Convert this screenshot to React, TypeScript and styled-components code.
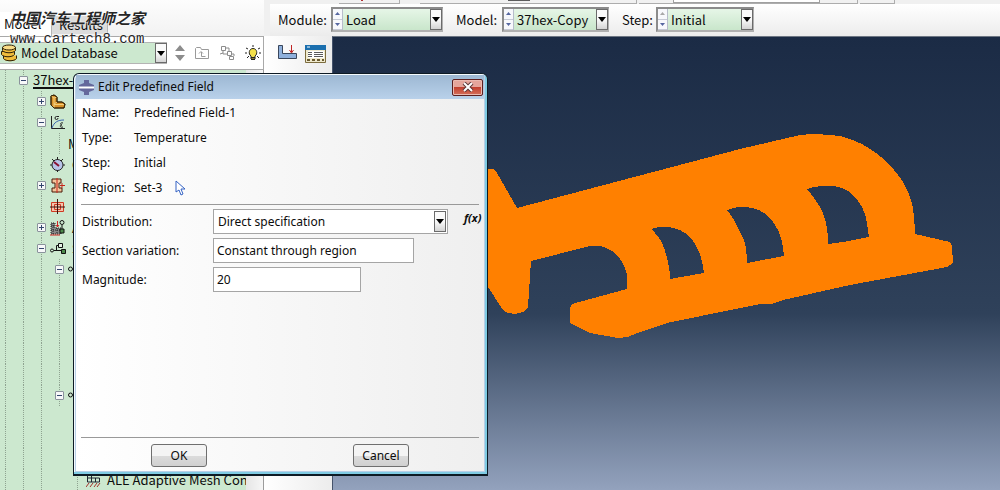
import React from 'react';
import styled, { createGlobalStyle, css } from 'styled-components';

const GlobalStyle = createGlobalStyle`
  * { box-sizing: border-box; }
  body {
    margin: 0;
    overflow: hidden;
    background: #f0f0f0;
    color: #0c0c0c;
    font: 13px/20px "Noto Sans CJK SC", sans-serif;
  }
  button, input, select { font: inherit; color: inherit; }
  svg { display: block; flex: none; }
`;

/* ---------- page frame ---------- */

const Page = styled.div`
  position: relative;
  display: flex;
  min-height: 100vh;
  overflow: hidden;
`;

const Sidebar = styled.aside`
  display: flex;
  flex-direction: column;
  width: 264px;
  flex: none;
  background: #fafafa;
`;

const TabBar = styled.div`
  display: flex;
  align-items: flex-end;
  height: 36px;
  background: linear-gradient(#fdfdfd, #f2f2f2);
`;

const Tab = styled.button<{ $active?: boolean }>`
  height: ${(p) => (p.$active ? 24 : 18)}px;
  width: ${(p) => (p.$active ? 52 : 56)}px;
  margin-bottom: ${(p) => (p.$active ? 0 : 2)}px;
  padding: 0 0 0 4px;
  border: 0;
  border-right: 1px solid #b4b4b4;
  text-align: left;
  line-height: 18px;
  background: ${(p) => (p.$active ? '#ffffff' : '#dcdcdc')};
  ${(p) => !p.$active && css`padding-left: 7px;`}
`;

const DatabaseBar = styled.div`
  display: flex;
  align-items: center;
  gap: 8px;
  height: 34px;
  padding-right: 2px;
  border: 1px solid #a9a9a9;
  border-left: 0;
  background: #ffffff;
`;

const DatabasePicker = styled.div`
  display: flex;
  align-items: center;
  width: 167px;
  height: 22px;
  border: 1px solid #b4b4b4;
  border-width: 1px 0;
  background: #cce8cf;
`;

const ToolButton = styled.button`
  display: flex;
  padding: 0;
  border: 0;
  background: none;
`;

const TreeArea = styled.div`
  display: flex;
  flex: 1;
  border-right: 1px solid #9c9c9c;
`;

const Tree = styled.ul`
  flex: 1;
  margin: 0;
  padding: 0;
  list-style: none;
  background: #cce8cf;
  overflow: hidden;
`;

const ScrollTrack = styled.div`
  width: 17px;
  background: linear-gradient(90deg, #e6e6e6, #f6f6f6);
`;

const TreeRow = styled.li`
  display: flex;
  align-items: center;
  height: 21px;
  white-space: nowrap;
`;

const Guide = styled.span<{ $line?: boolean; $first?: boolean }>`
  display: flex;
  align-items: center;
  justify-content: center;
  flex: none;
  align-self: stretch;
  width: ${(p) => (p.$first ? 14 : 18)}px;
  ${(p) => p.$line && css`
    background: repeating-linear-gradient(#8fa391 0 1px, transparent 1px 2px)
      ${p.$first ? 5 : 9}px 0 / 1px 100% no-repeat;
  `}
`;

const Expander = styled.button`
  display: flex;
  align-items: center;
  justify-content: center;
  width: 9px;
  height: 9px;
  padding: 0;
  border: 1px solid #8a929c;
  border-radius: 1px;
  background: #f7f8f9;
`;

const NodeIcon = styled.span<{ $wide?: boolean }>`
  display: block;
  flex: none;
  width: ${(p) => (p.$wide ? 22 : 21)}px;
`;

const NodeLabel = styled.span<{ $root?: boolean }>`
  line-height: 18px;
  ${(p) => p.$root && css`
    margin-left: 1px;
    border-bottom: 2px solid #111;
    line-height: 14px;
  `}
`;

const Main = styled.main`
  display: flex;
  flex-direction: column;
  flex: 1;
  min-width: 0;
`;

const ToolStrip = styled.div`
  display: flex;
  gap: 2px;
  height: 4px;
  padding-left: 75px;
`;

const StripSlot = styled.div<{ $w: number; $inner?: boolean }>`
  width: ${(p) => p.$w}px;
  height: 4px;
  padding-left: 34px;
  border: 1px solid #adadad;
  border-width: 0 1px 1px 0;
  background: #f1f1f1;
  &::before {
    content: "";
    display: ${(p) => (p.$inner ? 'block' : 'none')};
    width: 145px;
    height: 2px;
    border: 1px solid #a0a0a0;
    border-top: 0;
    background: #ffffff;
  }
`;

const StripMark = styled.div<{ $w: number; $indent: number; $color: string }>`
  width: ${(p) => p.$w}px;
  height: 1px;
  margin-left: ${(p) => p.$indent}px;
  background: ${(p) => p.$color};
`;

const StripSpace = styled.div`
  width: 16px;
`;

const ContextBar = styled.div`
  display: flex;
  align-items: center;
  height: 32px;
  margin-left: 6px;
  padding: 0 0 1px 8px;
  background: linear-gradient(#ffffff, #ececec);
  white-space: nowrap;
`;

const ContextLabel = styled.label<{ $w: number }>`
  width: ${(p) => p.$w}px;
`;

const ContextCombo = styled.div<{ $w: number; $gap: number }>`
  display: flex;
  width: ${(p) => p.$w}px;
  height: 25px;
  margin-right: ${(p) => p.$gap}px;
  border: 2px solid #8b8b8b;
  border-right: 1px solid #b0b0b0;
  border-bottom-color: #b0b0b0;
  background: linear-gradient(#e6f6e7, #c9e6cb);
`;

const Spinner = styled.div`
  display: flex;
  flex-direction: column;
  width: 10px;
  border-right: 1px solid #b7bccb;
  background: #f7f8fc;
`;

const SpinButton = styled.button`
  display: flex;
  flex: 1;
  align-items: center;
  justify-content: center;
  padding: 0;
  border: 0;
  border-bottom: 1px solid #c6cad6;
  background: none;
`;

const PlainSelect = styled.select`
  appearance: none;
  flex: 1;
  min-width: 0;
  height: 100%;
  padding: 0 0 0 3px;
  border: 0;
  outline: 0;
  background: transparent;
`;

const ArrowButton = styled.button`
  display: flex;
  align-items: center;
  justify-content: center;
  flex: none;
  align-self: stretch;
  width: 12px;
  padding: 0;
  border: 1px solid #6b6b6b;
  background: linear-gradient(#fafafa 50%, #d4d4d4);
`;

const Workspace = styled.div`
  display: flex;
  flex: 1;
`;

const Toolbox = styled.div`
  display: flex;
  align-items: flex-start;
  gap: 8px;
  width: 68px;
  padding: 9px 0 0 14px;
  background: linear-gradient(90deg, #ffffff, #ececec);
`;

const Viewport = styled.div`
  position: relative;
  flex: 1;
  overflow: hidden;
  border-top: 1px solid #6d7683;
  border-left: 1px solid #45536b;
  background: linear-gradient(#1b2b45 0%, #2f415a 61%, #93a2bd 100%);
`;

const Model = styled.svg`
  position: absolute;
  top: 0;
  left: 0;
`;

/* ---------- watermark ---------- */

const Watermark = styled.div`
  position: absolute;
  top: 6px;
  left: 10px;
  color: #262626;
  text-shadow: 0 0 1px #fff, 0 0 2px #fff;
  pointer-events: none;
`;

const WatermarkTitle = styled.div`
  font: italic 700 15px/24px "Noto Sans CJK SC", sans-serif;
`;

const WatermarkSite = styled.div`
  font: 14px/18px "Liberation Mono", monospace;
`;

/* ---------- dialog ---------- */

const Dialog = styled.section`
  position: absolute;
  top: 73px;
  left: 73px;
  display: flex;
  flex-direction: column;
  width: 415px;
  border: 1px solid #0d1a24;
  border-width: 1px 1px 2px;
  border-radius: 6px 6px 0 0;
  background: #b8cfe6;
  box-shadow: inset -2px -2px 0 #7fcbe3, inset 1px 1px 0 #f4fafd;
  padding: 0 3px 3px 2px;
  font: 12px/20px "Noto Sans", sans-serif;
`;

const TitleBar = styled.header`
  display: flex;
  align-items: center;
  gap: 4px;
  height: 24px;
  padding: 0 1px 0 3px;
  margin-top: 1px;
  background: linear-gradient(#9db8d3, #b9d1ea);
`;

const Title = styled.h1`
  flex: 1;
  margin: 0;
  font: inherit;
`;

const CloseButton = styled.button`
  display: flex;
  align-items: center;
  justify-content: center;
  width: 31px;
  height: 17px;
  padding: 0;
  border: 1px solid #5c1f1f;
  border-radius: 2px;
  background: linear-gradient(#e5a59b 0 45%, #c2402f 50%, #d4705c);
  box-shadow: inset 0 0 0 1px #eab9b0;
`;

const DialogBody = styled.form`
  padding: 1px 5px 4px 5px;
  background: linear-gradient(90deg, #ffffff, #efefef);
`;

const Facts = styled.dl`
  display: grid;
  grid-template-columns: 52px 1fr;
  grid-auto-rows: 25px;
  align-items: center;
  margin: 0;
  padding-left: 1px;
`;

const Fact = styled.dd`
  display: flex;
  align-items: center;
  gap: 13px;
  margin: 0;
`;

const Rule = styled.hr`
  height: 1px;
  margin: 4px 0;
  border: 0;
  background: #999999;
`;

const Fields = styled.div`
  display: grid;
  gap: 4px;
  padding-left: 1px;
  min-height: 224px;
  align-content: start;
`;

const FieldRow = styled.div`
  display: flex;
  height: 25px;
`;

const FieldLabel = styled.label`
  width: 131px;
  line-height: 25px;
`;

const TextBox = styled.input<{ $w: number }>`
  width: ${(p) => p.$w}px;
  padding: 0 3px;
  border: 1px solid #a5a5a5;
  outline: 0;
  background: #ffffff;
`;

const SelectBox = styled.div`
  display: flex;
  width: 235px;
  padding: 1px;
  border: 1px solid #a5a5a5;
  background: #ffffff;
`;

const FunctionButton = styled.button`
  align-self: flex-start;
  margin-left: 16px;
  padding: 0;
  border: 0;
  background: none;
  font: italic bold 11px/18px "Open Sans", sans-serif;
`;

const Actions = styled.footer`
  display: flex;
  justify-content: space-between;
  padding: 2px 70px 0;
`;

const ActionButton = styled.button`
  width: 56px;
  height: 23px;
  padding: 0;
  border: 1px solid #6f6f6f;
  border-radius: 3px;
  background: linear-gradient(#f4f4f4 0 50%, #dcdcdc 50%, #d0d0d0);
  line-height: 20px;
`;

/* ---------- drawings ---------- */

const DownArrow = () => (
  <svg width="8" height="5"><path d="M0 0h8L4 5z" fill="#000" /></svg>
);

const SpinArrow = ({ up, muted }: { up?: boolean; muted?: boolean }) => (
  <svg width="5" height="3"><path d={up ? 'M0 3h5L2.500 0z' : 'M0 0h5L2.500 3z'} fill={muted ? '#a8a8a8' : '#5566a0'} /></svg>
);

const ExpandMark = ({ plus }: { plus?: boolean }) => (
  <svg width="5" height="5" stroke="#34466e"><path d={plus ? 'M0 2.500h5M2.500 0v5' : 'M0 2.500h5'} /></svg>
);

const DatabaseIcon = () => (
  <svg width="18" height="18" fill="#f0bd3c" stroke="#2c2008">
    <path d="M3.500 12v3c2 3 11 3 13 0v-3z" stroke="none" />
    <path d="M3.500 11.500v3c2 3 11 3 13 0v-3" />
    <path d="M1.500 7.500v3c2 3 11 3 13 0v-3z" />
    <path d="M2.500 3.500v3c2 3 11 3 13 0v-3z" />
    <ellipse cx="9" cy="3.500" rx="6.500" ry="2.500" fill="#f9dc86" />
  </svg>
);

type IconName = 'part' | 'material' | 'calibration' | 'section' | 'profile' | 'assembly' | 'step' | 'node' | 'mesh';

const icons: Record<IconName, React.ReactNode> = {
  part: (
    <g stroke="#3b2606" strokeLinejoin="round">
      <path d="M1 2l3-1 3 2v5h5l3 2-1 4H4L1 11z" fill="#d8922a" />
      <path d="M1 2l3 2v10M4 4l3-1M4 10l3-2M4 10.500h10" fill="none" stroke="#f3cf7c" />
      <path d="M1 2l3-1 3 2v5h5l3 2-1 4H4L1 11z" fill="none" />
    </g>
  ),
  material: (
    <g fill="none">
      <path d="M1.500 1v12.500H15" stroke="#222" />
      <path d="M2 13C4 7 8 5 14 5" stroke="#3a66b0" />
      <path d="M9 1.500H6.500a1.500 1.500 0 1 0 1.500 1.500M13 8c-3-1-3 2-1 2-3 0-2 3 1 2" stroke="#222" />
    </g>
  ),
  calibration: (
    <g fill="none" stroke="#222">
      <circle cx="7.500" cy="8" r="5.500" fill="#b8c4e8" />
      <path d="M7.500 0v3M7.500 13v2M0 8h2M13 8h2M2 2l2 2M13 2l-2 2" />
      <path d="M4 5l5 4" stroke="#8a1230" strokeWidth="2" />
    </g>
  ),
  section: (
    <g>
      <path d="M2 1h9v4H9v5h3v4H2v-4h3V5H2z" fill="#f3c49c" stroke="#4a1a08" />
      <path d="M7 0v15M10 7.500h5M12 5v5" stroke="#c8261a" fill="none" />
    </g>
  ),
  profile: (
    <g fill="none" stroke="#d03a22">
      <path d="M1.500 3.500h12v9h-12zM4.500 5.500h6v5h-6z" fill="#f3c6ae" />
      <path d="M7.500 0v15M0 8h15" stroke="#3c1410" />
    </g>
  ),
  assembly: (
    <g>
      <path d="M1 3h4v5h6v6H1z" fill="#888" stroke="#222" strokeDasharray="1 1" />
      <path d="M3 3v11M1 6h4M1 10h10M7 8v6" stroke="#222" strokeDasharray="1 1" />
      <path d="M0 15h10M7.500 1v6M6 5l1.500 2L9 5" fill="none" stroke="#c22" />
      <circle cx="12" cy="2.500" r="2" fill="none" stroke="#111" />
      <path d="M12 5v5" stroke="#111" /><path d="M10 9h4v4h-4z" fill="#4c8a4c" stroke="#111" />
    </g>
  ),
  step: (
    <g fill="none" stroke="#111">
      <circle cx="2" cy="9.500" r="1.500" /><path d="M4 9.500h7M6.500 9V4.500H8" />
      <path d="M8.500 2.500h4v4h-4z" fill="#e4f2e5" /><path d="M11.500 8.500h4v4h-4z" fill="#4c8a4c" />
    </g>
  ),
  node: <g fill="none" stroke="#111"><circle cx="2.500" cy="7" r="2" /><path d="M5 7h6" /></g>,
  mesh: (
    <g fill="none" stroke="#1c2430">
      <path d="M1.500 2v8h12V6h-12M5.500 2v8M1.500 2.500h4M9.500 6v4" />
      <path d="M3 11l-3 4M7 11l-3 4M11 11l-3 4M14 11l-3 4" stroke="#a3312a" />
    </g>
  ),
};

interface Item { depth: number; box?: '+' | '-'; icon?: IconName; label?: string }

const items: Item[] = [
  { depth: 1, box: '-', label: '37hex-' },
  { depth: 2, box: '+', icon: 'part', label: 'P' },
  { depth: 2, box: '-', icon: 'material', label: 'M' },
  { depth: 3, label: 'M' },
  { depth: 2, icon: 'calibration', label: 'C' },
  { depth: 2, box: '+', icon: 'section', label: 'S' },
  { depth: 2, icon: 'profile', label: 'P' },
  { depth: 2, box: '+', icon: 'assembly', label: 'A' },
  { depth: 2, box: '-', icon: 'step', label: 'S' },
  { depth: 3, box: '-', icon: 'node' },
  ...Array.from({ length: 5 }, (): Item => ({ depth: 4 })),
  { depth: 3, box: '-', icon: 'node' },
  ...Array.from({ length: 3 }, (): Item => ({ depth: 3 })),
  { depth: 4, icon: 'mesh', label: 'ALE Adaptive Mesh Con' },
];

/* The third-level line runs only between the two step nodes. */
const hasLine = (row: number, level: number) =>
  level !== 3 || row === 3 || (row > 8 && row < 16);

function TreeNode({ item, row }: { item: Item; row: number }) {
  return (
    <TreeRow>
      {Array.from({ length: item.depth + 1 }, (_, level) => (
        <Guide key={level} $first={level === 0} $line={hasLine(row, level)}>
          {level === item.depth && item.box && (
            <Expander type="button" aria-label={item.box === '+' ? 'Expand' : 'Collapse'}>
              <ExpandMark plus={item.box === '+'} />
            </Expander>
          )}
        </Guide>
      ))}
      {item.icon && (
        <NodeIcon $wide={item.depth === 2}><svg width="16" height="16">{icons[item.icon]}</svg></NodeIcon>
      )}
      {item.label && <NodeLabel $root={item.depth === 1}>{item.label}</NodeLabel>}
    </TreeRow>
  );
}

interface ComboProps { id: string; label: string; value: string; labelWidth: number; width: number; gap: number; first?: boolean }

function Combo({ id, label, value, labelWidth, width, gap, first }: ComboProps) {
  return (
    <>
      <ContextLabel htmlFor={id} $w={labelWidth}>{label}</ContextLabel>
      <ContextCombo $w={width} $gap={gap}>
        <Spinner>
          <SpinButton aria-label={`Previous ${id}`}><SpinArrow up muted={first} /></SpinButton>
          <SpinButton aria-label={`Next ${id}`}><SpinArrow /></SpinButton>
        </Spinner>
        <PlainSelect id={id}><option>{value}</option></PlainSelect>
        <ArrowButton aria-label={`Open ${id}`}><DownArrow /></ArrowButton>
      </ContextCombo>
    </>
  );
}

const outline =
  'M480 169H493L497 173L517 208L740 149L800 135Q817 133 840 136Q852 139 862 144Q876 152 887 162Q897 173 903 182Q909 193 912 203Q915 218 915 234L950 242L952 246L953 263L947 267L850 285L783 300L772 304H760L740 308L667 323L637 333L628 337L618 338L590 333L570 323V308L572 304L627 289V275Q626 269 622 262Q618 255 612 251Q606 247 600 246H590L531 261L528 307L523 312L515 314L508 313L503 310L488 287H480Z';
const holes =
  'M651 229Q657 227 663 227Q671 227 677 229Q685 232 690 237Q696 244 699 252Q702 259 703 267L704 273L670 279Q670 271 668 262Q666 252 662 243Q658 235 651 229Z' +
  'M727 210Q734 207 740 207Q747 207 753 208Q761 210 768 216Q774 222 778 230Q782 239 783 247L784 256L747 263Q747 253 745 243Q743 237 740 232Q735 220 727 210Z' +
  'M807 189Q815 186 823 186Q831 185 838 187Q846 189 852 194Q858 200 862 207Q866 215 867 223L869 237L843 242L828 244Q828 233 826 223Q824 214 820 207Q814 197 807 189Z';

export default function App() {
  return (
    <>
      <GlobalStyle />
      <Page>
        <Sidebar>
          <TabBar>
            <Tab $active>Model</Tab>
            <Tab>Results</Tab>
          </TabBar>
          <DatabaseBar>
            <DatabasePicker>
              <DatabaseIcon />
              <PlainSelect aria-label="Database"><option>Model Database</option></PlainSelect>
              <ArrowButton aria-label="Open database list"><DownArrow /></ArrowButton>
            </DatabasePicker>
            <ToolButton aria-label="Move up or down">
              <svg width="10" height="16" fill="#8c8c8c"><path d="M0 6h10L5 0zM0 10h10l-5 6z" /></svg>
            </ToolButton>
            <ToolButton aria-label="Parent folder">
              <svg width="18" height="14" fill="none" stroke="#9a9a9a">
                <path d="M2.500 12.500v-10l1-1h4l1 2h7v9zM6 7.500l2-2 2 2M8.500 6v4.500h4" />
              </svg>
            </ToolButton>
            <ToolButton aria-label="Filter">
              <svg width="18" height="16" fill="none" stroke="#8c8c8c">
                <path d="M2.500 1.500h4v4h-4zM8.500 6.500h4v4h-4zM10.500 11.500h4v3h-4zM7 3h3v3M4 6v3h4M1 9l3-1M13 9h2v2" />
              </svg>
            </ToolButton>
            <ToolButton aria-label="Tips">
              <svg width="16" height="16" fill="none" stroke="#222">
                <path d="M8 0v2M1 3l2 1M15 3l-2 1M0 8h2M14 8h2M2 13l2-2M14 13l-2-2" />
                <path d="M6 11C3 9 4 3.500 8 3.500S13 9 10 11v3H6z" fill="#f3e04a" />
                <path d="M6 12.500h4M6 14.500h4" />
              </svg>
            </ToolButton>
          </DatabaseBar>
          <TreeArea>
            <Tree>{items.map((item, i) => <TreeNode key={i} item={item} row={i} />)}</Tree>
            <ScrollTrack />
          </TreeArea>
        </Sidebar>

        <Main>
          <ToolStrip>
            <StripSlot $w={61}>
              <StripMark $w={2} $indent={-12} $color="#b03030" />
            </StripSlot>
            <StripSpace />
            <StripSlot $w={217}>
              <StripMark $w={22} $indent={54} $color="#5c5c5c" />
            </StripSlot>
            <StripSlot $w={219} $inner />
            <StripSlot $w={35} />
          </ToolStrip>
          <ContextBar>
            <Combo id="module" label="Module:" value="Load" labelWidth={53} width={112} gap={13} />
            <Combo id="model" label="Model:" value="37hex-Copy" labelWidth={46} width={107} gap={13} />
            <Combo id="step" label="Step:" value="Initial" labelWidth={34} width={98} gap={0} first />
          </ContextBar>
          <Workspace>
            <Toolbox>
              <ToolButton aria-label="Create load">
                <svg width="19" height="16">
                  <path d="M.500.500h4v8h14v5h-18z" fill="#8fb0dc" stroke="#39465c" />
                  <path d="M13.500 0v7M11.500 5l2 3 2-3" stroke="#c02424" fill="none" />
                </svg>
              </ToolButton>
              <ToolButton aria-label="Load manager">
                <svg width="21" height="18">
                  <path d="M.500.500h20v17H.500z" fill="#efe9cd" stroke="#7c6c3e" />
                  <path d="M0 0h21v5H0z" fill="#1b6fae" /><path d="M2 2h3" stroke="#fff" />
                  <path d="M3 6h16v7H3z" fill="#fff" />
                  <path d="M3 7.500h4M3 9.500h4M3 11.500h4M9 7.500h9M9 9.500h9M9 11.500h9" stroke="#5a5a5a" />
                  <path d="M2 14h3v2H2zM7 14h3v2H7zM12 14h3v2h-3zM17 14h2v2h-2z" fill="#6a5a2e" />
                </svg>
              </ToolButton>
            </Toolbox>
            <Viewport>
              <Model width="668" height="454" viewBox="333 37 668 454" shapeRendering="crispEdges">
                <path d={outline + holes} fill="#ff8000" fillRule="evenodd" />
              </Model>
            </Viewport>
          </Workspace>
        </Main>

        <Watermark>
          <WatermarkTitle>中国汽车工程师之家</WatermarkTitle>
          <WatermarkSite>www.cartech8.com</WatermarkSite>
        </Watermark>

        <Dialog role="dialog" aria-labelledby="dialog-title">
          <TitleBar>
            <svg width="15" height="15">
              <path d="M5 0h5v3l5 2v5l-5 2v3H5v-3l-5-2V5l5-2z" fill="#65689c" />
              <path d="M0 7.500h15" stroke="#fff" strokeWidth="2" />
            </svg>
            <Title id="dialog-title">Edit Predefined Field</Title>
            <CloseButton aria-label="Close">
              <svg width="12" height="10" fill="none">
                <path d="M2 1l8 8M10 1L2 9" stroke="#5c3838" strokeWidth="4" />
                <path d="M2 1l8 8M10 1L2 9" stroke="#fff" strokeWidth="2" />
              </svg>
            </CloseButton>
          </TitleBar>
          <DialogBody onSubmit={(e) => e.preventDefault()}>
            <Facts>
              <dt>Name:</dt><Fact>Predefined Field-1</Fact>
              <dt>Type:</dt><Fact>Temperature</Fact>
              <dt>Step:</dt><Fact>Initial</Fact>
              <dt>Region:</dt>
              <Fact>
                Set-3
                <svg width="11" height="16" fill="#fff" stroke="#3563c4">
                  <path d="M1 1v11l3-2 2 5 2-1-2-5h4z" />
                </svg>
              </Fact>
            </Facts>
            <Rule />
            <Fields>
              <FieldRow>
                <FieldLabel htmlFor="distribution">Distribution:</FieldLabel>
                <SelectBox>
                  <PlainSelect id="distribution"><option>Direct specification</option></PlainSelect>
                  <ArrowButton type="button" aria-label="Open distribution list"><DownArrow /></ArrowButton>
                </SelectBox>
                <FunctionButton type="button">f(x)</FunctionButton>
              </FieldRow>
              <FieldRow>
                <FieldLabel htmlFor="variation">Section variation:</FieldLabel>
                <TextBox id="variation" $w={201} defaultValue="Constant through region" />
              </FieldRow>
              <FieldRow>
                <FieldLabel htmlFor="magnitude">Magnitude:</FieldLabel>
                <TextBox id="magnitude" $w={148} defaultValue="20" />
              </FieldRow>
            </Fields>
            <Rule />
            <Actions>
              <ActionButton type="submit">OK</ActionButton>
              <ActionButton type="button">Cancel</ActionButton>
            </Actions>
          </DialogBody>
        </Dialog>
      </Page>
    </>
  );
}
